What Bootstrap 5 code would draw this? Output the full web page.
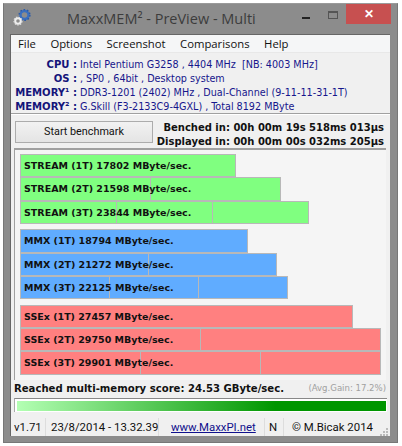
<!DOCTYPE html>
<html lang="en">
<head>
  <meta charset="UTF-8">
  <meta name="viewport" content="width=device-width, initial-scale=1.0">
  <title>MaxxMEM2 - PreView - Multi</title>
  <link href="https://cdn.jsdelivr.net/npm/bootstrap@5.3.0/dist/css/bootstrap.min.css" rel="stylesheet">
  <style>
    body {
      background: #fff;
      font-family: "Open Sans", "Liberation Sans", sans-serif;
      overflow: hidden;
    }
    .app-window {
      width: 395px;
      height: 440px;
      margin: 3px 0 0 3px;
      background: #8c8c8c;
      border: 1px solid #777;
      border-top-color: #9a9a9a;
      padding: 0 7px 7px 6px;
    }
    .title-bar {
      height: 30px;
      color: #3c3c3c;
      font-size: 14.5px;
    }
    .title-icon { margin: 5px 0 0 3px; }
    .title-text { margin: 0 0 0 36px; line-height: 30px; }
    .win-btns { margin-left: auto; margin-right: -1px; }
    .win-min { width: 8px; height: 2px; background: #222; margin: 13px 18px 0 0; }
    .win-max { width: 10px; height: 8px; border: 1px solid #555; border-top-width: 2px; margin: 7px 8px 0 0; }
    .win-close {
      width: 45px; height: 20px; background: #c75050; color: #fff;
      font-size: 12px; font-weight: 700; line-height: 20px; text-align: center;
    }
    .client {
      height: 402px;
      background: #f0f0f0;
      border: 1px solid #666;
      border-width: 1px 0 0 1px;
    }
    .menu-bar {
      height: 18px;
      background: #f5f6f7;
      border-bottom: 1px solid #e8e8e8;
      font-size: 11.3px;
      line-height: 18px;
      color: #111;
      padding-left: 7px;
      gap: 14.5px;
    }
    .info-box {
      height: 61px;
      padding-top: 5px;
      border-bottom: 1px solid #a0a0a0;
      box-shadow: 0 1px 0 #fff;
      font-family: "DejaVu Sans Condensed", "Liberation Sans", sans-serif;
      font-size: 10.7px;
      color: #16168c;
    }
    .info-line { height: 14px; line-height: 14px; white-space: nowrap; }
    .info-key { width: 66px; text-align: right; font-size: 11.2px; font-weight: 700; color: #14147a; margin-right: 3px; }
    .bench-row { height: 34px; padding: 7px 6px 0 4px; }
    .start-btn {
      width: 138px; height: 22px; padding: 0;
      font-family: Roboto, sans-serif;
      font-size: 10.8px; color: #111;
      background: linear-gradient(#f2f2f2, #e4e4e4);
      border: 1px solid #acacac; border-radius: 0;
    }
    .bench-times {
      margin-left: auto;
      text-align: right;
      font-family: "DejaVu Sans", sans-serif;
      font-size: 10px;
      font-weight: 700;
      line-height: 14px;
      color: #111;
      white-space: nowrap;
    }
    .chart-panel {
      height: 232px;
      margin: 0 4px 0 3px;
      padding: 4px 5px 0 5px;
      background: #f5f5f5;
      border-top: 2px solid #a0a0a0;
      border-left: 1px solid #a0a0a0;
    }
    .bar-group { margin-bottom: 5.5px; }
    .bar-line { position: relative; height: 23.3px; }
    .bar-seg { height: 100%; border: 1px solid #b8b8b8; border-left-width: 0; }
    .bar-seg:first-child { border-left-width: 1px; }
    .bar-stream .bar-seg { background: #80ff80; }
    .bar-mmx .bar-seg { background: #60acff; }
    .bar-ssex .bar-seg { background: #ff8080; }
    .bar-label {
      position: absolute; left: 4px; top: 0;
      line-height: 23px;
      font-family: "DejaVu Sans", sans-serif;
      font-size: 9.5px;
      font-weight: 700;
      color: #111;
      white-space: nowrap;
    }
    .score-row { height: 17px; padding: 0 4px 0 3px; }
    .score-text {
      font-family: "DejaVu Sans", sans-serif;
      font-size: 10.1px; font-weight: 700; color: #111;
    }
    .avg-gain {
      margin-left: auto;
      font-family: "DejaVu Sans Condensed", "Liberation Sans", sans-serif;
      font-size: 9.5px; color: #a0a0a0;
    }
    .score-meter {
      height: 14px;
      margin: 1px 3px 0 3px;
      padding: 2px 1px 1px 2px;
      border-top: 1px solid #888;
      border-left: 1px solid #aaa;
      background: #fff;
    }
    .score-fill { height: 100%; background: linear-gradient(90deg, #b4ffb4, #009600 70%); }
    .status-bar {
      height: 20px;
      margin-top: 5px;
      font-family: Roboto, sans-serif;
      font-size: 11.4px;
      color: #111;
      white-space: nowrap;
    }
    .status-cell { height: 18px; line-height: 18px; border-right: 1px solid #ddd; }
    .cell-version { width: 35px; padding-left: 3px; }
    .cell-date { width: 113px; padding-left: 5px; }
    .cell-link { width: 106px; padding-left: 12px; }
    .cell-flag { width: 19px; padding-left: 4px; }
    .cell-author { width: 90px; padding-left: 8px; border-right: 0; }
    .status-cell a { color: #10108c; }
    .grip { margin-left: auto; align-self: flex-end; margin-right: 1px; }
  </style>
</head>
<body>
  <div class="app-window">
    <div class="title-bar d-flex">
      <svg class="title-icon" width="18" height="18" viewBox="0 0 18 18">
        <circle cx="11.5" cy="6" r="4" fill="none" stroke="#3a6fc0" stroke-width="2.4"/>
        <circle cx="11.5" cy="6" r="5.4" fill="none" stroke="#2a5aa8" stroke-width="1.4" stroke-dasharray="1.7 1.7"/>
        <circle cx="5" cy="12" r="2.8" fill="none" stroke="#eee" stroke-width="2"/>
        <circle cx="5" cy="12" r="4" fill="none" stroke="#ddd" stroke-width="1.2" stroke-dasharray="1.5 1.2"/>
      </svg>
      <div class="title-text">MaxxMEM² - PreView - Multi</div>
      <div class="win-btns d-flex">
        <div class="win-min"></div>
        <div class="win-max"></div>
        <div class="win-close">✕</div>
      </div>
    </div>
    <div class="client">
      <div class="menu-bar d-flex">
        <span>File</span><span>Options</span><span>Screenshot</span><span>Comparisons</span><span>Help</span>
      </div>
      <div class="info-box">
        <div class="info-line d-flex"><div class="info-key">CPU :</div><div>Intel Pentium G3258 , 4404 MHz&nbsp; [NB: 4003 MHz]</div></div>
        <div class="info-line d-flex"><div class="info-key">OS :</div><div>, SP0 , 64bit , Desktop system</div></div>
        <div class="info-line d-flex"><div class="info-key">MEMORY¹ :</div><div>DDR3-1201 (2402) MHz , Dual-Channel (9-11-11-31-1T)</div></div>
        <div class="info-line d-flex"><div class="info-key">MEMORY² :</div><div>G.Skill (F3-2133C9-4GXL) , Total 8192 MByte</div></div>
      </div>
      <div class="bench-row d-flex">
        <button type="button" class="btn start-btn">Start benchmark</button>
        <div class="bench-times">Benched in: 00h 00m 19s 518ms 013µs<br>Displayed in: 00h 00m 00s 032ms 205µs</div>
      </div>
      <div class="chart-panel">
        <div class="bar-group bar-stream">
          <div class="bar-line d-flex"><div class="bar-seg" style="width:216px"></div><div class="bar-label">STREAM (1T) 17802 MByte/sec.</div></div>
          <div class="bar-line d-flex"><div class="bar-seg" style="width:131px"></div><div class="bar-seg" style="width:130px"></div><div class="bar-label">STREAM (2T) 21598 MByte/sec.</div></div>
          <div class="bar-line d-flex"><div class="bar-seg" style="width:97px"></div><div class="bar-seg" style="width:96px"></div><div class="bar-seg" style="width:96px"></div><div class="bar-label">STREAM (3T) 23844 MByte/sec.</div></div>
        </div>
        <div class="bar-group bar-mmx">
          <div class="bar-line d-flex"><div class="bar-seg" style="width:228px"></div><div class="bar-label">MMX (1T) 18794 MByte/sec.</div></div>
          <div class="bar-line d-flex"><div class="bar-seg" style="width:129px"></div><div class="bar-seg" style="width:128px"></div><div class="bar-label">MMX (2T) 21272 MByte/sec.</div></div>
          <div class="bar-line d-flex"><div class="bar-seg" style="width:90px"></div><div class="bar-seg" style="width:89px"></div><div class="bar-seg" style="width:89px"></div><div class="bar-label">MMX (3T) 22125 MByte/sec.</div></div>
        </div>
        <div class="bar-group bar-ssex">
          <div class="bar-line d-flex"><div class="bar-seg" style="width:333px"></div><div class="bar-label">SSEx (1T) 27457 MByte/sec.</div></div>
          <div class="bar-line d-flex"><div class="bar-seg" style="width:181px"></div><div class="bar-seg" style="width:180px"></div><div class="bar-label">SSEx (2T) 29750 MByte/sec.</div></div>
          <div class="bar-line d-flex"><div class="bar-seg" style="width:121px"></div><div class="bar-seg" style="width:120px"></div><div class="bar-seg" style="width:120px"></div><div class="bar-label">SSEx (3T) 29901 MByte/sec.</div></div>
        </div>
      </div>
      <div class="score-row d-flex align-items-center">
        <div class="score-text">Reached multi-memory score: 24.53 GByte/sec.</div>
        <div class="avg-gain">(Avg.Gain: 17.2%)</div>
      </div>
      <div class="score-meter"><div class="score-fill"></div></div>
      <div class="status-bar d-flex align-items-center">
        <div class="status-cell cell-version">v1.71</div>
        <div class="status-cell cell-date">23/8/2014 - 13.32.39</div>
        <div class="status-cell cell-link"><a href="#">www.MaxxPI.net</a></div>
        <div class="status-cell cell-flag">N</div>
        <div class="status-cell cell-author">© M.Bicak 2014</div>
        <svg class="grip" width="9" height="9" viewBox="0 0 9 9" fill="#bbb">
          <rect x="6" y="0" width="2" height="2"/><rect x="3" y="3" width="2" height="2"/><rect x="6" y="3" width="2" height="2"/>
          <rect x="0" y="6" width="2" height="2"/><rect x="3" y="6" width="2" height="2"/><rect x="6" y="6" width="2" height="2"/>
        </svg>
      </div>
    </div>
  </div>
  <script src="https://cdn.jsdelivr.net/npm/bootstrap@5.3.0/dist/js/bootstrap.bundle.min.js"></script>
</body>
</html>
